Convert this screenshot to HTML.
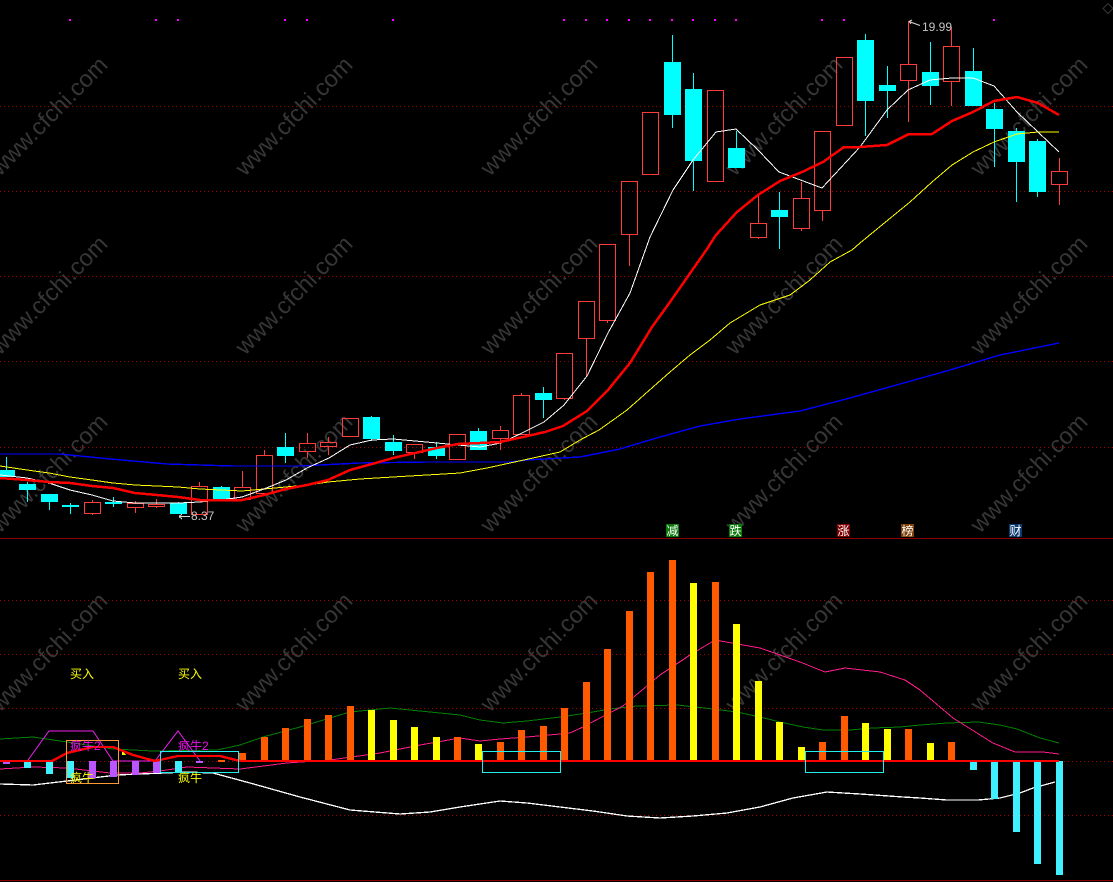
<!DOCTYPE html>
<html lang="zh">
<head>
<meta charset="utf-8">
<title>K线图</title>
<style>
html,body{margin:0;padding:0;background:#000;width:1113px;height:882px;overflow:hidden}
svg{display:block;position:absolute;left:0;top:0}
.wm{font:23.500px "Liberation Sans",sans-serif;fill:#363636}
.cn{font-family:"Liberation Sans","WenQuanYi Zen Hei","Noto Sans CJK SC",sans-serif;font-size:12px}
.num{font:12px "Liberation Sans",sans-serif;fill:#c4c4c4}
</style>
</head>
<body>
<svg width="1113" height="882" viewBox="0 0 1113 882" xmlns="http://www.w3.org/2000/svg">
<rect width="1113" height="882" fill="#000"/>

<!-- watermark -->
<g class="wm">
<text transform="translate(0,177) rotate(-45.5)">www.cfchi.com</text>
<text transform="translate(245,177) rotate(-45.5)">www.cfchi.com</text>
<text transform="translate(490,177) rotate(-45.5)">www.cfchi.com</text>
<text transform="translate(735,177) rotate(-45.5)">www.cfchi.com</text>
<text transform="translate(980,177) rotate(-45.5)">www.cfchi.com</text>
<text transform="translate(0,356) rotate(-45.5)">www.cfchi.com</text>
<text transform="translate(245,356) rotate(-45.5)">www.cfchi.com</text>
<text transform="translate(490,356) rotate(-45.5)">www.cfchi.com</text>
<text transform="translate(735,356) rotate(-45.5)">www.cfchi.com</text>
<text transform="translate(980,356) rotate(-45.5)">www.cfchi.com</text>
<text transform="translate(0,534) rotate(-45.5)">www.cfchi.com</text>
<text transform="translate(245,534) rotate(-45.5)">www.cfchi.com</text>
<text transform="translate(490,534) rotate(-45.5)">www.cfchi.com</text>
<text transform="translate(735,534) rotate(-45.5)">www.cfchi.com</text>
<text transform="translate(980,534) rotate(-45.5)">www.cfchi.com</text>
<text transform="translate(0,713) rotate(-45.5)">www.cfchi.com</text>
<text transform="translate(245,713) rotate(-45.5)">www.cfchi.com</text>
<text transform="translate(490,713) rotate(-45.5)">www.cfchi.com</text>
<text transform="translate(735,713) rotate(-45.5)">www.cfchi.com</text>
<text transform="translate(980,713) rotate(-45.5)">www.cfchi.com</text>
</g>

<!-- corner diamond -->
<path d="M1108 3.500L1113 8.500L1108 13.500L1103 8.500Z" fill="none" stroke="#363636"/>

<!-- grid -->
<g stroke="#a00000" stroke-width="1" stroke-dasharray="1 3" shape-rendering="crispEdges">
<path d="M0 106.500H1113M0 191.500H1113M0 276.500H1113M0 361.500H1113M0 447.500H1113"/>
<path d="M0 600.500H1113M0 654.500H1113M0 708.500H1113M0 761.500H1113M0 815.500H1113"/>
</g>
<g fill="#8a0000" shape-rendering="crispEdges">
<rect x="0" y="538" width="1113" height="1"/>
<rect x="0" y="880" width="1113" height="1"/>
</g>

<!-- top dots -->
<g fill="#ff00ff" shape-rendering="crispEdges">
<rect x="69" y="19" width="2" height="2"/><rect x="155" y="19" width="2" height="2"/><rect x="177" y="19" width="2" height="2"/><rect x="284" y="19" width="2" height="2"/><rect x="306" y="19" width="2" height="2"/><rect x="392" y="19" width="2" height="2"/>
<rect x="563" y="19" width="2" height="2"/><rect x="585" y="19" width="2" height="2"/><rect x="606" y="19" width="2" height="2"/><rect x="628" y="19" width="2" height="2"/><rect x="649" y="19" width="2" height="2"/><rect x="671" y="19" width="2" height="2"/><rect x="692" y="19" width="2" height="2"/><rect x="714" y="19" width="2" height="2"/><rect x="735" y="19" width="2" height="2"/>
<rect x="821" y="19" width="2" height="2"/><rect x="843" y="19" width="2" height="2"/><rect x="993" y="19" width="2" height="2"/>
</g>

<!-- hollow red candles -->
<g fill="none" stroke="#ff3c3c" stroke-width="1" shape-rendering="crispEdges">
<rect x="84.500" y="502.500" width="16" height="11"/>
<rect x="127.500" y="503.500" width="16" height="4"/>
<rect x="148.500" y="504.500" width="16" height="2"/>
<rect x="191.500" y="486.500" width="16" height="28"/>
<rect x="234.500" y="487.500" width="16" height="12"/>
<rect x="256.500" y="455.500" width="16" height="38"/>
<rect x="299.500" y="443.500" width="16" height="8"/>
<rect x="320.500" y="442.500" width="16" height="4"/>
<rect x="342.500" y="418.500" width="16" height="18"/>
<rect x="406.500" y="444.500" width="16" height="8"/>
<rect x="449.500" y="434.500" width="16" height="25"/>
<rect x="492.500" y="430.500" width="16" height="8"/>
<rect x="513.500" y="395.500" width="16" height="39"/>
<rect x="556.500" y="353.500" width="16" height="45"/>
<rect x="578.500" y="301.500" width="16" height="37"/>
<rect x="599.500" y="244.500" width="16" height="76"/>
<rect x="621.500" y="181.500" width="16" height="53"/>
<rect x="642.500" y="112.500" width="16" height="62"/>
<rect x="707.500" y="90.500" width="16" height="91"/>
<rect x="750.500" y="223.500" width="16" height="14"/>
<rect x="793.500" y="198.500" width="16" height="30"/>
<rect x="814.500" y="131.500" width="16" height="79"/>
<rect x="836.500" y="57.500" width="16" height="68"/>
<rect x="900.500" y="64.500" width="16" height="16"/>
<rect x="943.500" y="46.500" width="16" height="35"/>
<rect x="1051.500" y="171.500" width="16" height="13"/>
<path d="M92.500 500V502M92.500 514V515M135.500 501V503M135.500 508V513M156.500 499V504M156.500 507V508M199.500 482V486M242.500 471V487M264.500 450V455M264.500 494V496M307.500 433V443M307.500 452V458M328.500 437V442M328.500 447V455M414.500 453V459M500.500 426V430M500.500 439V450M521.500 393V395M564.500 399V400M586.500 339V376M607.500 321V323M629.500 235V266M758.500 195V223M758.500 238V239M801.500 182V198M801.500 229V231M822.500 211V221M908.500 21V64M908.500 81V122M951.500 27V46M951.500 82V106M1059.500 158V171M1059.500 185V205"/>
</g>

<!-- cyan candles -->
<g stroke="#00ffff" stroke-width="1" fill="none" shape-rendering="crispEdges">
<path d="M6.500 457V470M27.500 482V502M49.500 502V510M70.500 503V514M113.500 497V507M178.500 502V503M221.500 486V499M285.500 433V463M371.500 416V441M393.500 435V455M436.500 442V459M478.500 428V431M543.500 387V418M672.500 35V128M693.500 73V191M736.500 131V148M779.500 192V249M865.500 34V136M887.500 66V118M930.500 42V105M973.500 48V71M994.500 103V167M1016.500 128V202M1037.500 139V197"/>
</g>
<g fill="#00ffff" shape-rendering="crispEdges">
<rect x="-2" y="470" width="17" height="7"/>
<rect x="19" y="484" width="17" height="6"/>
<rect x="41" y="494" width="17" height="8"/>
<rect x="62" y="505" width="17" height="2"/>
<rect x="105" y="502" width="17" height="2"/>
<rect x="170" y="503" width="17" height="11"/>
<rect x="213" y="487" width="17" height="12"/>
<rect x="277" y="447" width="17" height="9"/>
<rect x="363" y="417" width="17" height="22"/>
<rect x="385" y="442" width="17" height="9"/>
<rect x="428" y="447" width="17" height="9"/>
<rect x="470" y="431" width="17" height="19"/>
<rect x="535" y="393" width="17" height="7"/>
<rect x="664" y="62" width="17" height="53"/>
<rect x="685" y="89" width="17" height="72"/>
<rect x="728" y="148" width="17" height="20"/>
<rect x="771" y="210" width="17" height="7"/>
<rect x="857" y="40" width="17" height="61"/>
<rect x="879" y="85" width="17" height="6"/>
<rect x="922" y="72" width="17" height="14"/>
<rect x="965" y="71" width="17" height="35"/>
<rect x="986" y="109" width="17" height="20"/>
<rect x="1008" y="131" width="17" height="31"/>
<rect x="1029" y="141" width="17" height="51"/>
</g>

<!-- main MA lines -->
<g fill="none" stroke-linejoin="round" shape-rendering="crispEdges">
<polyline stroke="#0000ff" stroke-width="1.400" points="0,454 60,454 100,458 133,461 167,464 233,466 300,466 360,463 427,462 510,462 527,460 580,457 620,449 660,437 700,426 740,419 800,411 850,398 900,384 950,370 1000,355 1059,343"/>
<polyline stroke="#ffff00" stroke-width="1" points="0,466 27,470 49,473 70,477 92,480 113,483 135,485 157,486 178,487 200,489 221,490 242,491 264,489 307,485 328,482 360,479 393,477 427,475 460,473 487,468 510,463 533,458 560,452 580,440 599,430 627,410 653,387 670,372 690,355 710,340 730,323 760,305 790,295 810,280 830,262 852,250 860,243 888,220 910,202 932,182 952,165 973,152 994,142 1017,134 1038,132 1059,132"/>
<polyline stroke="#ffffff" stroke-width="1" points="0,475 27,478 49,483 70,490 92,495 113,501 135,503 157,503 178,503 200,502 221,500 242,497 264,489 286,480 307,468 329,458 350,445 372,440 393,439 415,441 437,443 458,445 480,447 501,443 522,433 544,422 564,405 587,376 608,333 630,293 650,237 673,190 693,160 716,132 736,129 758,150 779,172 822,188 860,147 887,110 908,90 930,80 952,78 973,78 994,86 1017,112 1038,132 1059,152"/>
<polyline stroke="#ff0000" stroke-width="2.500" points="0,478 27,480 49,482 70,483 92,486 113,488 135,493 157,495 178,497 200,500 221,500 242,500 264,495 286,489 307,485 328,480 350,470 372,464 393,458 415,453 437,448 458,444 480,443 500,442 523,437 545,432 563,426 587,411 608,390 630,363 652,327 670,302 707,249 716,235 737,212 758,195 780,181 802,172 823,162 844,147 860,147 887,145 909,134 932,134 952,121 973,112 994,101 1017,97 1038,103 1059,115"/>
</g>

<!-- price labels -->
<path d="M190 516.500H179M179 516.500L182 514M179 516.500L182 519" fill="none" stroke="#d8d8d8" stroke-width="1" shape-rendering="crispEdges"/>
<text class="num" x="191" y="520">8.37</text>
<path d="M920 25.500L909 21.500M909 21.500L912 20M909 21.500L911 24" fill="none" stroke="#d8d8d8" stroke-width="1"/>
<text class="num" x="922" y="31">19.99</text>

<!-- small tags -->
<g shape-rendering="crispEdges">
<rect x="666" y="524" width="13" height="13" fill="#0a7a0a"/>
<rect x="729" y="524" width="13" height="13" fill="#0a7a0a"/>
<rect x="837" y="524" width="13" height="13" fill="#800000"/>
<rect x="901" y="524" width="13" height="13" fill="#80400a"/>
<rect x="1009" y="524" width="13" height="13" fill="#0a3a70"/>
</g>
<g class="cn" fill="#ffffff" text-anchor="middle">
<text x="672.500" y="535">减</text>
<text x="735.500" y="535">跌</text>
<text x="843.500" y="535">涨</text>
<text x="907.500" y="535">榜</text>
<text x="1015.500" y="535">财</text>
</g>

<!-- lower pane lines below bars -->
<g fill="none" shape-rendering="crispEdges">
<polyline stroke="#008000" stroke-width="1" points="0,739 33,737 67,742 113,749 153,751 217,750 240,745 263,737 300,727 350,712 390,708 430,712 460,715 480,720 503,723 527,721 560,717 587,713 610,709 637,706 677,705 713,709 737,712 760,717 780,722 803,727 823,730 850,730 873,728 900,727 920,725 947,723 978,722 1000,725 1017,729 1040,738 1059,743"/>
<polyline stroke="#ff1a8c" stroke-width="1" points="0,769 33,767 67,768 110,773 140,773 160,771 187,767 240,769 287,763 330,760 380,753 420,745 460,738 480,741 500,739 527,737 560,734 570,733 583,727 600,718 623,706 660,675 690,655 715,640 760,648 800,662 825,672 845,668 880,672 905,680 920,690 953,718 993,743 1015,752 1043,752 1059,754"/>
<polyline stroke="#ffffff" stroke-width="1.300" points="0,784 33,785 67,781 117,775 187,772 213,773 250,783 300,797 350,810 400,814 430,812 460,807 500,801 527,803 560,807 593,811 627,816 660,818 693,816 727,813 760,807 793,798 827,792 860,794 903,797 920,798 947,800 978,800 1000,798 1020,793 1033,788 1055,782"/>
<polyline stroke="#ee22ee" stroke-width="1" shape-rendering="auto" points="28,760 49,731 93,731 113,761 155,761 178,731 200,761"/>
</g>

<!-- bars -->
<g shape-rendering="crispEdges">
<g fill="#bb55ff">
<rect x="3" y="761" width="7" height="3"/><rect x="89" y="761" width="7" height="17"/><rect x="110" y="761" width="7" height="16"/><rect x="132" y="761" width="7" height="14"/><rect x="153" y="761" width="7" height="12"/><rect x="196" y="761" width="7" height="2"/>
</g>
<g fill="#40f0ff">
<rect x="24" y="761" width="7" height="7"/><rect x="46" y="761" width="7" height="13"/><rect x="67" y="761" width="7" height="17"/><rect x="175" y="761" width="7" height="12"/>
<rect x="970" y="761" width="7" height="9"/><rect x="991" y="761" width="7" height="38"/><rect x="1013" y="761" width="7" height="71"/><rect x="1034" y="761" width="7" height="103"/><rect x="1056" y="761" width="7" height="114"/>
</g>
<g fill="#ff5a00">
<rect x="218" y="760" width="7" height="2"/><rect x="239" y="753" width="7" height="8"/><rect x="261" y="737" width="7" height="24"/><rect x="282" y="728" width="7" height="33"/><rect x="304" y="719" width="7" height="42"/><rect x="325" y="715" width="7" height="46"/><rect x="347" y="706" width="7" height="55"/><rect x="454" y="737" width="7" height="24"/><rect x="497" y="742" width="7" height="19"/><rect x="518" y="730" width="7" height="31"/><rect x="540" y="726" width="7" height="35"/><rect x="561" y="708" width="7" height="53"/><rect x="583" y="682" width="7" height="79"/><rect x="604" y="649" width="7" height="112"/><rect x="626" y="611" width="7" height="150"/><rect x="647" y="572" width="7" height="189"/><rect x="669" y="560" width="7" height="201"/><rect x="712" y="582" width="7" height="179"/><rect x="819" y="742" width="7" height="19"/><rect x="841" y="716" width="7" height="45"/><rect x="905" y="729" width="7" height="32"/><rect x="948" y="742" width="7" height="19"/>
</g>
<g fill="#ffff00">
<rect x="368" y="710" width="7" height="51"/><rect x="390" y="720" width="7" height="41"/><rect x="411" y="727" width="7" height="34"/><rect x="433" y="737" width="7" height="24"/><rect x="475" y="744" width="7" height="17"/><rect x="690" y="583" width="7" height="178"/><rect x="733" y="624" width="7" height="137"/><rect x="755" y="681" width="7" height="80"/><rect x="776" y="722" width="7" height="39"/><rect x="798" y="747" width="7" height="14"/><rect x="862" y="723" width="7" height="38"/><rect x="884" y="729" width="7" height="32"/><rect x="927" y="743" width="7" height="18"/>
<path d="M122 751V755H126Z"/>
</g>
</g>

<!-- lower thick red line -->
<polyline fill="none" stroke="#ff0000" stroke-width="2.400" shape-rendering="crispEdges" points="0,761 52,761 67,753 93,747 113,747 133,755 155,761 178,756 220,756 240,761 1059,761"/>

<!-- boxes -->
<g fill="none" stroke-width="1" shape-rendering="crispEdges">
<rect x="66.500" y="740.500" width="52" height="43" stroke="#ff9933"/>
<rect x="160.500" y="751.500" width="78" height="21" stroke="#22eeee"/>
<rect x="482.500" y="751.500" width="78" height="21" stroke="#22eeee"/>
<rect x="805.500" y="751.500" width="78" height="21" stroke="#22eeee"/>
</g>

<!-- signal text -->
<g class="cn">
<text x="70" y="678" fill="#ffff00">买入</text>
<text x="178" y="678" fill="#ffff00">买入</text>
<text x="70" y="750" fill="#ee11ee">疯牛2</text>
<text x="178" y="750" fill="#ee11ee">疯牛2</text>
<text x="70" y="782" fill="#ffff00">疯牛</text>
<text x="178" y="782" fill="#ffff00">疯牛</text>
</g>
</svg>
</body>
</html>
